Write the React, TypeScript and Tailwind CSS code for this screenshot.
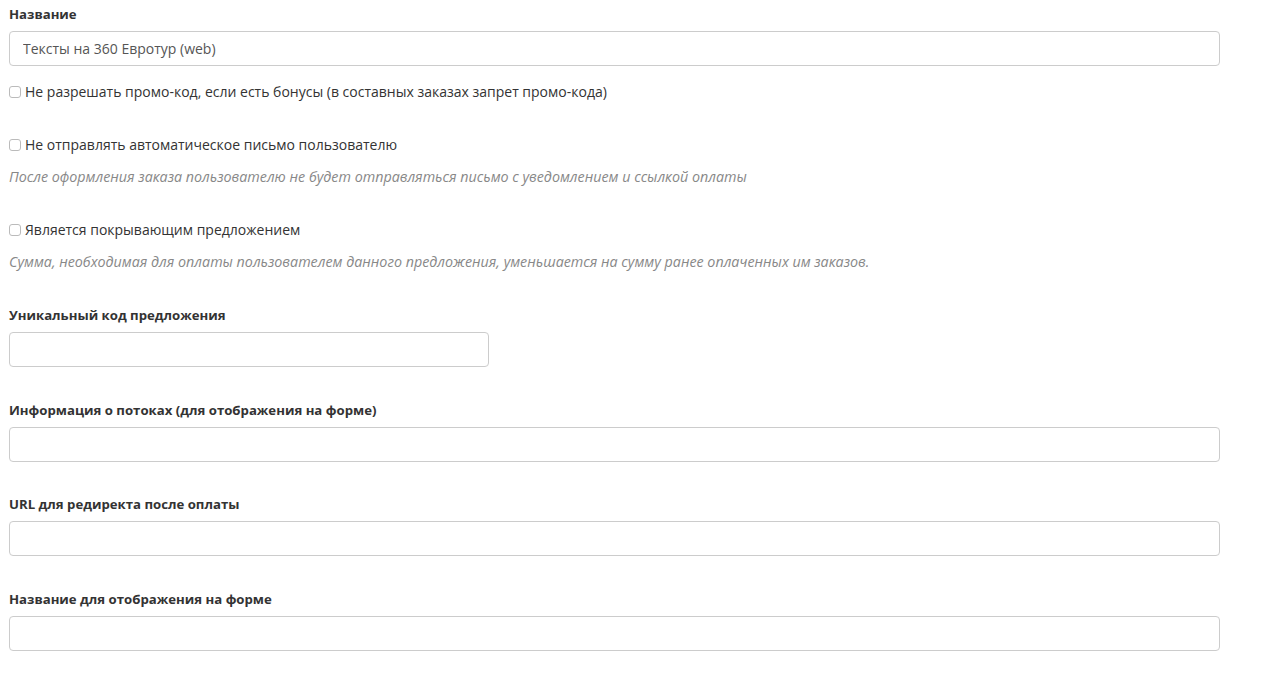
import React from "react";

const font = { fontFamily: '"Open Sans", "Liberation Sans", sans-serif' };

function Field({ label, value, narrow, className }: { label: string; value?: string; narrow?: boolean; className?: string }) {
  return (
    <div className={className}>
      <div className="text-[13.2px] leading-[20px] font-bold text-[#333]">{label}</div>
      <input
        readOnly
        value={value ?? ""}
        className={`mt-[7px] block h-[35px] rounded-[4px] border border-[#ccc] bg-white px-[13px] text-[14px] text-[#555] outline-none ${
          narrow ? "w-[480px]" : "w-full"
        }`}
      />
    </div>
  );
}

function Check({ label, className }: { label: string; className?: string }) {
  return (
    <label className={`flex items-center gap-[4px] text-[14px] leading-[20px] text-[#333] ${className ?? ""}`}>
      <span className="inline-block h-[12px] w-[12px] rounded-[3px] border border-[#bbb] bg-white" />
      {label}
    </label>
  );
}

function Help({ text }: { text: string }) {
  return <p className="mt-[12px] text-[14.3px] leading-[20px] italic text-[#888]">{text}</p>;
}

export default function App() {
  return (
    <div className="min-h-screen w-full bg-white" style={font}>
      <div className="w-[1220px] pl-[9px] pt-[4px]">
        <Field label="Название" value="Тексты на 360 Евротур (web)" />

        <Check className="mt-[16px]" label="Не разрешать промо-код, если есть бонусы (в составных заказах запрет промо-кода)" />

        <Check className="mt-[33px]" label="Не отправлять автоматическое письмо пользователю" />
        <Help text="После оформления заказа пользователю не будет отправляться письмо с уведомлением и ссылкой оплаты" />

        <Check className="mt-[33px]" label="Является покрывающим предложением" />
        <Help text="Сумма, необходимая для оплаты пользователем данного предложения, уменьшается на сумму ранее оплаченных им заказов." />

        <Field className="mt-[33px]" label="Уникальный код предложения" narrow />
        <Field className="mt-[33px]" label="Информация о потоках (для отображения на форме)" />
        <Field className="mt-[32px]" label="URL для редиректа после оплаты" />
        <Field className="mt-[33px]" label="Название для отображения на форме" />
      </div>
    </div>
  );
}
